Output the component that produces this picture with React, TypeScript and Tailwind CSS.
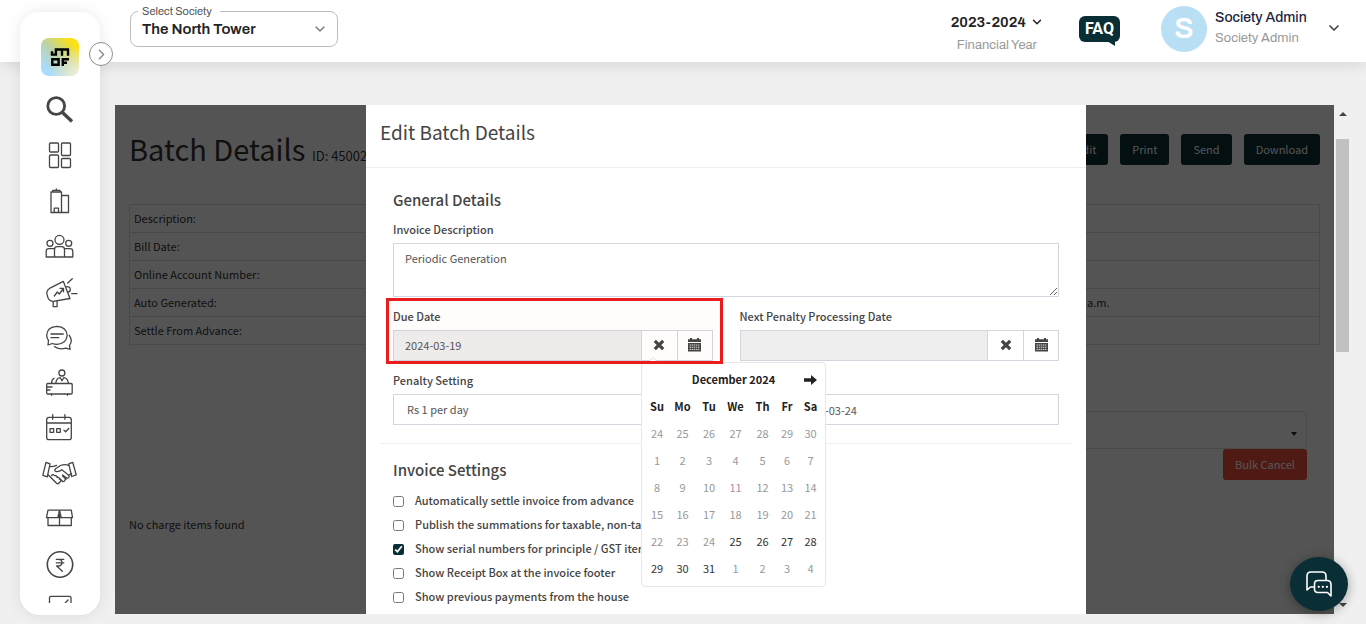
import React from "react";
import { ChevronDown, ChevronRight } from "lucide-react";

const sans = "font-['Source_Sans_Pro','Noto_Sans_CJK_SC',sans-serif]";
const arial = "font-['Archivo','Liberation_Sans',sans-serif]";

function NavIcon({ children, width = 1.3 }: { children: React.ReactNode; width?: number }) {
  return (
    <svg width={36} height={36} viewBox="0 0 36 36" fill="none" stroke="#454545" strokeWidth={width} strokeLinejoin="round" strokeLinecap="round" aria-hidden="true" className="shrink-0">
      {children}
    </svg>
  );
}

const navItems: { label: string; height: string; icon: React.ReactNode }[] = [
  {
    label: "Search",
    height: "h-[46px]",
    icon: (
      <NavIcon width={2.8}>
        <circle cx="14.2" cy="15" r="8.4" />
        <path d="M20.5 21.5 30 30.5" strokeWidth={3.4} strokeLinecap="butt" />
      </NavIcon>
    ),
  },
  {
    label: "Dashboard",
    height: "h-[46px]",
    icon: (
      <NavIcon>
        <rect x="7.5" y="6" width="9" height="9" rx="1" />
        <rect x="19.5" y="6" width="9" height="12.5" rx="1" />
        <rect x="7.5" y="18" width="9" height="12.5" rx="1" />
        <rect x="19.5" y="21.5" width="9" height="9" rx="1" />
      </NavIcon>
    ),
  },
  {
    label: "Society",
    height: "h-[46px]",
    icon: (
      <NavIcon>
        <path d="M9 9h10.5v20.500H9zM10.700 9V7.300h7.300V9M14.300 7V5.800M19.500 12.500h7v17h-7M12.200 29.500v-4.300h4.300v4.300" />
      </NavIcon>
    ),
  },
  {
    label: "Members",
    height: "h-[46px]",
    icon: (
      <NavIcon>
        <circle cx="17.500" cy="10.800" r="4.500" />
        <circle cx="8" cy="14.300" r="3" />
        <circle cx="26.700" cy="14.300" r="3" />
        <path d="M12.500 28v-7.500q0-2.800 2.800-2.800h4.400q2.800 0 2.800 2.800V28zM12.500 19.700H7q-2.800 0-2.800 2.800V28h8.300M22.500 19.700H28q2.800 0 2.800 2.800V28h-8.300" />
      </NavIcon>
    ),
  },
  {
    label: "Notices",
    height: "h-[45px]",
    icon: (
      <NavIcon>
        <path d="M21.300 6.300 8 13.200q-4.500 2.600-2.700 7.200 1 6 5.700 5.900L28 23.500zM24 11.800q4-.6 4.300 2.400.2 2.500-2.600 3M25.700 8l4.600-4.300M29.700 18.700H35M11.200 26.300v5.400h3.900V26M12.300 21l3-4 2 2 4-5.500M18 13.300h3.500v3.500" />
      </NavIcon>
    ),
  },
  {
    label: "Messages",
    height: "h-[45px]",
    icon: (
      <NavIcon>
        <path d="M6.500 20.500Q4.700 18 4.700 15.300 5.200 6.600 15 6.300q9.700.6 10.200 9-.6 8.600-10.200 9-2.700 0-4.700-.8L6 25zM9 14h12.300M9 17.700h7.700M27.300 15.300q3.800 5.500.2 10l.6 4-4.300-1.200Q16.500 30 12.500 26.600" />
      </NavIcon>
    ),
  },
  {
    label: "Reception",
    height: "h-[45px]",
    icon: (
      <NavIcon>
        <rect x="4.700" y="18.500" width="25.500" height="10.500" rx="1" />
        <circle cx="19.900" cy="8" r="3" />
        <path d="M13.700 18.300q1-5.600 4.600-5.600l1.700 3 1.700-3q3.700 0 4.700 5.600M9.700 18.300q-.4-3.300 2.300-5M5 22h5M5 25h3M9.500 29v1.300M25.500 29v1.300" />
      </NavIcon>
    ),
  },
  {
    label: "Calendar",
    height: "h-[46px]",
    icon: (
      <NavIcon>
        <path d="M7 7.300h20q2.300 0 2.300 2.300v17.800q0 2.300-2.300 2.300H7q-2.300 0-2.300-2.300V9.600Q4.700 7.300 7 7.300zM4.700 13h24.600M10.700 4.700v4.600M22.900 4.700v4.600M8 18.700h3.600v3.600H8zM14.700 18.700h3.600v3.600h-3.600zM22 20.200l1.700 1.600 3-3.300" />
      </NavIcon>
    ),
  },
  {
    label: "Vendors",
    height: "h-[44px]",
    icon: (
      <NavIcon>
        <path d="M4 7.300l4 1.500-2.700 13-4.500-1.500zM30.700 7.300l-4 1.500 3 12.700 4.500-1.700zM8 11.500q3 .3 6.500-1.200M26.700 10.300q-4.200-1.300-8.200.2l-5 3.300q-1.600 1.800.5 2.700 3 .7 5.700-1.800 4 2.800 7 5.700 1.200 2-1 2.800-1.500 0-5-3.200M6.300 20l8.500 8.500q1.500.8 2.500-.6M17.800 23.500l2.900 3q2 .4 2.300-1.600M20.700 21l3.300 3.200M9.500 20.500q1.800-1.800 3 .2 2.300-.7 2.600 1.600 2-.3 2.200 1.700 2 0 1.500 2l-2 2.200M27 19.800q1.500-.2 2.500-1.300" />
      </NavIcon>
    ),
  },
  {
    label: "Assets",
    height: "h-[46px]",
    icon: (
      <NavIcon>
        <path d="M6 10.200h23.300l1.200 7.500H4.500zM6 17.700v7.800h23.300v-7.800M17.500 10.200v15.300" />
        <path d="M17 11l-1.500 6.500h4L18 11z" fill="#454545" strokeWidth={0.6} />
      </NavIcon>
    ),
  },
  {
    label: "Income",
    height: "h-[48px]",
    icon: (
      <NavIcon>
        <circle cx="18" cy="17.500" r="12.700" strokeWidth={1.600} />
        <path d="M14.300 12.300h7.500M14.300 15.800h7.500M14.300 12.300h2.300q3.400.1 3.400 3.300-.1 3.400-3.400 3.400h-2l5.800 5.300" />
      </NavIcon>
    ),
  },
  {
    label: "Tasks",
    height: "h-[36px]",
    icon: (
      <NavIcon>
        <path d="M7.500 30V8.800q0-1.500 1.500-1.500h18.500q1.500 0 1.500 1.500V30zM19 14.500l2 2 5-5.500" />
      </NavIcon>
    ),
  },
];

function Sidebar() {
  return (
    <aside className="fixed top-3 bottom-[9px] left-5 z-20 flex w-20 flex-col items-center rounded-[20px] bg-white pt-[26px] pb-3 shadow-[0_0_16px_rgba(0,0,0,0.09)]">
      <a href="#home" aria-label="Home" className="flex size-[38px] shrink-0 items-center justify-center rounded-lg bg-[radial-gradient(circle_at_100%_100%,#f3f3e0_0%,transparent_55%),linear-gradient(45deg,#a9dbff_15%,#bdd2a4_50%,#fbe116_85%)]">
        <svg width="20" height="20" viewBox="0 0 20 20" fill="none" stroke="#000" strokeWidth="2.400" aria-hidden="true">
          <path d="M2 4.200v4.600M2 7.600h3.500M5.900 8.800V2.500h13.200M12 2v6.800M18 2v6.800M2.300 12.300h6.300v5.500H2.300zM12.800 19v-6.700H19M14 15.800h3" />
        </svg>
      </a>
      <button type="button" aria-label="Expand menu" className="absolute top-[30px] left-[69px] flex size-6 items-center justify-center rounded-full border border-[#8c8c8c] bg-white text-[#8c8c8c]">
        <ChevronRight size={17} />
      </button>
      <nav aria-label="Main" className="mt-[10px] min-h-0 flex-1 overflow-hidden">
        <ul>
          {navItems.map((item) => (
            <li key={item.label}>
              <a href="#nav" aria-label={item.label} className={`flex items-center justify-center ${item.height}`}>
                {item.icon}
              </a>
            </li>
          ))}
        </ul>
      </nav>
    </aside>
  );
}

function Header() {
  return (
    <header className={`relative z-10 flex h-[62px] items-start justify-between bg-white pr-6 pl-[130px] shadow-[0_2px_16px_rgba(0,0,0,0.12)] ${arial}`}>
      <div className="relative mt-[11px]">
        <label htmlFor="society" className="absolute -top-2 left-2 bg-white pr-2 pl-1 text-[11px] leading-4 text-[#555]">Select Society</label>
        <select id="society" className="h-9 w-52 appearance-none rounded-lg border border-[#bdbdbd] bg-white px-[11px] text-[15px] font-semibold text-[#222]">
          <option>The North Tower</option>
        </select>
        <ChevronDown size={16} className="pointer-events-none absolute top-[10px] right-[10px] text-[#777]" />
      </div>
      <div className="flex items-start">
        <button type="button" className="mt-3 text-left">
          <span className="flex items-center gap-1 text-[15px] leading-5 font-semibold whitespace-nowrap text-[#222]">
            2023-2024
            <ChevronDown size={14} strokeWidth={2.5} />
          </span>
          <span className="mt-1 block pl-[6px] text-[13px] leading-[18px] text-[#999]">Financial Year</span>
        </button>
        <a href="#faq" className="relative mt-4 ml-[35px] flex h-[26px] w-[41px] items-center justify-center rounded-md bg-[#0a2e36] font-['Roboto',sans-serif] text-[16px] font-bold text-white">
          FAQ
          <svg width="10" height="6" viewBox="0 0 10 6" fill="#0a2e36" className="absolute top-[25px] right-[3px]" aria-hidden="true"><path d="M0 0h8v5z" /></svg>
        </a>
        <span className="mt-[6px] ml-[41px] flex size-[46px] items-center justify-center rounded-full bg-[#b9dff4] text-[29px] font-semibold text-white">S</span>
        <button type="button" className="mt-2 ml-2 flex items-center text-left">
          <span className="w-[111px]">
            <span className="block text-[14px] leading-5 font-medium text-[#1b2340]">Society Admin</span>
            <span className="block text-[13px] leading-5 text-[#999]">Society Admin</span>
          </span>
          <ChevronDown size={16} strokeWidth={2.5} className="text-[#444]" />
        </button>
      </div>
    </header>
  );
}

const rows: [string, string][] = [
  ["Description:", ""],
  ["Bill Date:", ""],
  ["Online Account Number:", ""],
  ["Auto Generated:", "a.m."],
  ["Settle From Advance:", ""],
];

function BatchPage() {
  return (
    <div className="h-full bg-white px-[14px] pt-[29px] text-[11px] text-[#333]">
      <div className="flex items-start justify-between">
        <h1 className="text-[29px] leading-7 text-[#333]">
          Batch Details <span className="text-[13px]">ID: 45002</span>
        </h1>
        <div className="flex gap-3">
          {["Edit", "Print", "Send", "Download"].map((name) => (
            <button key={name} type="button" className="h-[31px] rounded-[3px] bg-[#0a2e36] px-3 text-white">
              {name}
            </button>
          ))}
        </div>
      </div>
      <table className="mt-[34px] w-full border border-[#ddd]">
        <tbody>
          {rows.map(([label, value]) => (
            <tr key={label} className="h-7 border-b border-[#ddd]">
              <th scope="row" className="px-1 text-left font-normal">{label}</th>
              <td className="text-right">{value}</td>
              <td className="w-[210px]" />
            </tr>
          ))}
        </tbody>
      </table>
      <div className="mt-[66px] flex flex-col items-end pr-[13px]">
        <div className="relative w-1/2">
          <select aria-label="Charge" className="block h-[38px] w-full appearance-none rounded-[4px] border border-[#ddd] bg-white" />
          <svg width="6" height="4" viewBox="0 0 6 4" className="pointer-events-none absolute right-[10px] bottom-[13px]" aria-hidden="true"><path d="M0 0h6L3 4z" fill="#0a2e36" /></svg>
        </div>
        <button type="button" className="h-[31px] rounded-[3px] bg-[#f0503c] px-3 text-white">Bulk Cancel</button>
      </div>
      <p className="mt-[35px] leading-[18px]">No charge items found</p>
    </div>
  );
}

function RemoveIcon() {
  return (
    <svg width="12" height="12" viewBox="0 0 12 12" aria-hidden="true">
      <path d="M1.800 1.800l8.400 8.400M10.200 1.800l-8.400 8.400" stroke="#444" strokeWidth="3.200" />
    </svg>
  );
}

function CalendarIcon() {
  return (
    <svg width="13" height="14" viewBox="0 0 13 14" aria-hidden="true">
      <path d="M0 1.300h2V0h2v1.300h5V0h2v1.300h2V4H0zM0 5h13v8.500H0z" fill="#444" />
      <path d="M1.500 7h10M1.500 9.200h10M1.500 11.400h10" stroke="#fff" strokeWidth=".8" strokeDasharray="1.500 .6" />
    </svg>
  );
}

const weeks = [
  [24, 25, 26, 27, 28, 29, 30],
  [1, 2, 3, 4, 5, 6, 7],
  [8, 9, 10, 11, 12, 13, 14],
  [15, 16, 17, 18, 19, 20, 21],
  [22, 23, 24, 25, 26, 27, 28],
  [29, 30, 31, 1, 2, 3, 4],
];

function DatePopup() {
  return (
    <div className="absolute top-full left-[248px] z-10 mt-px w-[185px] rounded-[4px] border border-[#e7e7e7] bg-white pt-[3px] pb-1 pl-[3px]">
      <svg width="12" height="7" viewBox="0 0 12 7" className="absolute -top-[6px] left-[5px]" aria-hidden="true"><path d="M0 6.500 6 .5l6 6" fill="#fff" stroke="#ddd" /></svg>
      <table className="table-fixed text-center">
        <colgroup>
          <col className="w-6" />
          <col className="w-[27px]" />
          <col className="w-[26px]" />
          <col className="w-[27px]" />
          <col className="w-[27px]" />
          <col className="w-[22px]" />
          <col className="w-[25px]" />
        </colgroup>
        <thead className="text-[#222]">
          <tr className="h-[27px]">
            <td />
            <th colSpan={5}>December 2024</th>
            <th>
              <button type="button" aria-label="Next month" className="block w-full">
                <svg width="13" height="10" viewBox="0 0 13 10" className="mx-auto" aria-hidden="true"><path d="M0 3.200h7V0l6 5-6 5V6.800H0z" fill="#222" /></svg>
              </button>
            </th>
          </tr>
          <tr className="h-[27px]">
            {["Su", "Mo", "Tu", "We", "Th", "Fr", "Sa"].map((d) => (
              <th key={d} scope="col">{d}</th>
            ))}
          </tr>
        </thead>
        <tbody>
          {weeks.map((week, w) => (
            <tr key={w} className="h-[27px]">
              {week.map((day, d) => {
                const open = (w === 4 && d > 2) || (w === 5 && d < 3);
                return (
                  <td key={d} className={open ? "text-[#333]" : "text-[#999]"}>{day}</td>
                );
              })}
            </tr>
          ))}
        </tbody>
      </table>
    </div>
  );
}

function DateField({ id, label, value }: { id: string; label: string; value: string }) {
  return (
    <div>
      <label htmlFor={id} className="block leading-4 font-medium">{label}</label>
      <div className="mt-[6px] flex h-[31px] border border-[#d2d6de]">
        <input id={id} type="text" readOnly value={value} className="min-w-0 flex-1 bg-[#eee] px-[11px] text-[#555]" />
        <button type="button" aria-label={`Clear ${label}`} className="flex w-9 items-center justify-center border-l border-[#d2d6de] pb-px">
          <RemoveIcon />
        </button>
        <button type="button" aria-label={`Pick ${label}`} className="flex w-[35px] items-center justify-center border-l border-[#d2d6de] pb-px">
          <CalendarIcon />
        </button>
      </div>
    </div>
  );
}

const settings: [string, boolean][] = [
  ["Automatically settle invoice from advance", false],
  ["Publish the summations for taxable, non-taxable", false],
  ["Show serial numbers for principle / GST items", true],
  ["Show Receipt Box at the invoice footer", false],
  ["Show previous payments from the house", false],
];

function EditDialog() {
  return (
    <section role="dialog" aria-labelledby="dialog-title" className="h-full w-[720px] overflow-hidden bg-white text-[11px] text-[#444]">
      <h2 id="dialog-title" className="border-b border-[#eee] px-[14px] pt-[13px] pb-[21px] text-[19px] leading-7">Edit Batch Details</h2>
      <form className="px-[14px]">
        <div className="border-b border-[#eee] px-[13px] pt-[22px] pb-[18px]">
          <h3 className="text-[15px] leading-5 font-medium">General Details</h3>
          <label htmlFor="description" className="mt-[11px] block leading-4 font-medium">Invoice Description</label>
          <textarea id="description" defaultValue="Periodic Generation" className="mt-[6px] block h-[54px] w-full border border-[#d2d6de] px-[11px] py-[5px] leading-[18px] text-[#555]" />
          <div className="mt-[11px] grid grid-cols-2 gap-x-[27px] gap-y-[11px]">
            <div className="relative">
              <DateField id="due" label="Due Date" value="2024-03-19" />
              <DatePopup />
              <div className="pointer-events-none absolute -top-[10px] -right-[10px] -bottom-[3px] -left-[7px] z-20 border-3 border-[#ea1c1c] bg-[#ff0000]/[0.01]" />
            </div>
            <DateField id="penalty-date" label="Next Penalty Processing Date" value="" />
            <div>
              <label htmlFor="penalty" className="block leading-4 font-medium">Penalty Setting</label>
              <select id="penalty" className="mt-[6px] block h-[31px] w-full appearance-none border border-[#d2d6de] px-[13px] text-[#555]">
                <option>Rs 1 per day</option>
              </select>
            </div>
            <input aria-label="Bill Date" type="text" defaultValue="2024-03-24" className="h-[31px] w-full self-end border border-[#d2d6de] pl-[60px] text-[#555]" />
          </div>
        </div>
        <div role="group" aria-labelledby="invoice-settings" className="px-[13px] pt-4">
          <h3 id="invoice-settings" className="text-[15px] leading-5 font-medium">Invoice Settings</h3>
          <div className="mt-2">
            {settings.map(([label, on]) => (
              <label key={label} className="flex h-6 items-center gap-[11px] font-medium whitespace-nowrap">
                <input type="checkbox" defaultChecked={on} className="mt-[2px] size-[11px] accent-[#0a2e36]" />
                {label}
              </label>
            ))}
          </div>
        </div>
      </form>
    </section>
  );
}

export default function App() {
  return (
    <div className={`flex h-screen flex-col overflow-hidden bg-[#f0f0f0] ${sans}`}>
      <Header />
      <Sidebar />
      <main className="mt-[43px] mb-[10px] ml-[115px] flex min-h-0 flex-1 pr-4">
        <div className="relative min-w-0 flex-1 overflow-hidden">
          <BatchPage />
          <div className="absolute inset-0 flex justify-center bg-black/67 pl-[3px]">
            <EditDialog />
          </div>
        </div>
        <div className="ml-px flex w-[15px] flex-col items-center pt-[7px] pb-[7px]" aria-hidden="true">
          <svg width="8" height="4" viewBox="0 0 8 4"><path d="M0 4h8L4 0z" fill="#444" /></svg>
          <span className="mt-[23px] h-[213px] w-[13px] bg-[#c1c1c1]" />
          <svg width="8" height="4" viewBox="0 0 8 4" className="mt-auto"><path d="M0 0h8L4 4z" fill="#444" /></svg>
        </div>
      </main>
      <button type="button" aria-label="Open chat" className="fixed right-[18px] bottom-[13px] z-30 flex h-[54px] w-[58px] items-center justify-center rounded-[50%] bg-[#0a2e36] shadow-[0_2px_12px_rgba(0,0,0,0.35)]">
        <svg width="26" height="26" viewBox="0 0 26 26" fill="none" stroke="#fff" strokeWidth="1.600" strokeLinejoin="round" strokeLinecap="round" aria-hidden="true">
          <path d="M20 9V5q0-4-4-4H5Q1 1 1 5v14l3.500-3H8M12 9.500h9q4 0 4 4V25l-3.500-3.500H12q-3.500 0-3.500-3.500v-5q0-3.500 3.500-3.500z" />
          <path d="M12.700 15.800h.1M16.800 15.800h.1M20.900 15.800h.1" strokeWidth="2.200" />
        </svg>
      </button>
    </div>
  );
}
